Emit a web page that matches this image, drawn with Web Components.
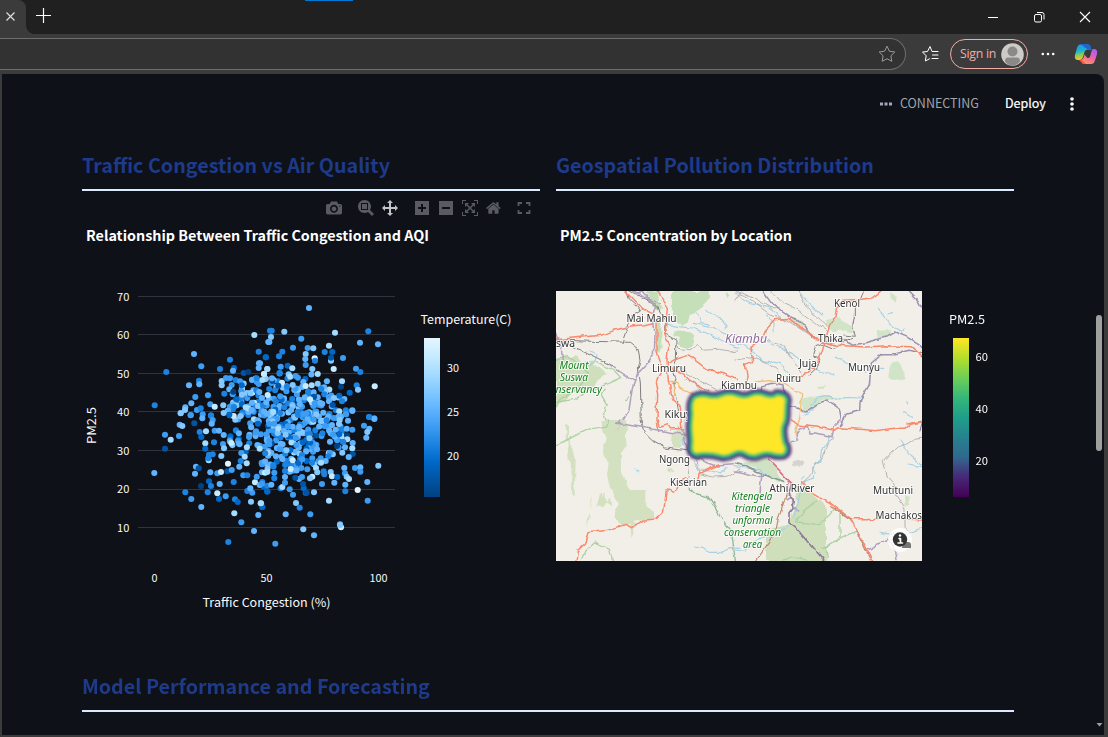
<!DOCTYPE html>
<html lang="en"><head><meta charset="utf-8"><title>Air Quality Dashboard</title>
<style>html,body{margin:0;height:100%;overflow:hidden;background:#3b3b3b;font-family:"Noto Sans CJK SC","Noto Sans",sans-serif}</style></head>
<body><dashboard-app></dashboard-app>
<script>
function define(name, html){
  const t=document.createElement('template'); t.innerHTML=html;
  customElements.define(name, class extends HTMLElement{
    constructor(){super();this.attachShadow({mode:'open'}).append(t.content.cloneNode(true));}
  });
}

define('browser-bar', `<style>
:host{display:block;height:74px}
.tabs{height:34px;background:#202020;display:flex;position:relative}
.tab{width:26px;background:#3b3b3b;border-radius:0 8px 0 0;display:flex;position:relative}
.tab i{position:absolute;left:26px;bottom:0;width:8px;height:8px;background:radial-gradient(circle at 100% 0,#202020 7.5px,#3b3b3b 8px)}
.tabs svg,.tools svg{display:block}
.new{margin:8px 0 0 9px}
.load{position:absolute;left:305px;top:0;width:48px;height:1px;background:#0078d4}
.win{margin-left:auto;display:flex}
.tools{height:40px;background:#3b3b3b;display:flex;align-items:center;box-sizing:border-box}
.addr{width:906px;height:32px;box-sizing:border-box;background:#323232;border:1px solid #6e6e6e;border-left:0;border-radius:0 16px 16px 0;display:flex;align-items:center;justify-content:flex-end;padding-right:9px}
.fav{margin-left:15px}
.sign{margin-left:10px;width:78px;height:30px;box-sizing:border-box;border:1px solid #f6aaa4;border-radius:15px;display:flex;align-items:center;justify-content:space-between;padding:0 3px 0 9px;color:#f6aaa4;font:12.3px "Open Sans","Noto Sans",sans-serif;white-space:nowrap;letter-spacing:-.25px}
.sign span{margin-top:-1px}
.dots{margin-left:12px}.cop{margin-left:18px}
</style>
<div class="tabs"><div class="tab"><svg width="26" height="34"><path d="M6.5 12.5l8 8m0-8l-8 8" stroke="#ddd" stroke-width="1.2"/></svg><i></i></div>
<svg class="new" width="18" height="18"><path d="M1 7.5h15M8.5 0v15" stroke="#fff" stroke-width="1.2"/></svg><div class="load"></div>
<svg class="win" width="138" height="34" fill="none" stroke="#fff"><path d="M18 17.5h10"/><rect x="64.500" y="14.500" width="7" height="7.500" rx="1.500"/><path d="M67 12.500h5a2 2 0 0 1 2 2v5"/><path d="M110 12l10 10m0-10l-10 10" stroke-width="1.100"/></svg></div>
<div class="tools"><div class="addr"><svg width="18" height="18" viewBox="0 0 18 18"><path d="M9 1.200l2.400 5 5.400.8-3.900 3.800.9 5.500L9 13.700l-4.800 2.600.9-5.500L1.200 7l5.400-.8z" fill="none" stroke="#999" stroke-linejoin="round"/></svg></div>
<svg class="fav" width="19" height="18" fill="none" stroke="#fff" stroke-linejoin="round" stroke-linecap="round"><path d="M17 6.500h-6L9 1.500 6.500 6.500 1.500 7l3.700 3.800-.9 5.200 4.200-2.200M11.500 10h5.500M11 13.500h6"/></svg>
<div class="sign"><span>Sign in</span><svg width="23" height="23"><circle cx="11.500" cy="11.500" r="11.300" fill="#cdcbc8"/><circle cx="11.500" cy="8.500" r="5" fill="#8b8987"/><path d="M4 18.500q0-4 3-4h9q3 0 3 4-3 4-7.500 4T4 18.500z" fill="#8b8987"/></svg></div>
<svg class="dots" width="16" height="4" fill="#fff"><circle cx="2.800" cy="2" r="1.300"/><circle cx="8" cy="2" r="1.300"/><circle cx="13.200" cy="2" r="1.300"/></svg>
<svg class="cop" width="24" height="24" viewBox="0 0 24 24"><defs><linearGradient id="a" x2=".2" y2="1"><stop stop-color="#238fff"/><stop offset=".45" stop-color="#18b5d0"/><stop offset=".7" stop-color="#8acb55"/><stop offset="1" stop-color="#f5c62a"/></linearGradient><linearGradient id="b" x1=".8" x2=".2" y2="1"><stop stop-color="#a65cf5"/><stop offset=".5" stop-color="#ee67a6"/><stop offset="1" stop-color="#ff9b55"/></linearGradient></defs>
<path d="M6 2.500h8q2 0 2.800 3l.5 2h-4q-2 0-2.800 2.500l-1.500 5Q8 18 5.500 18H4q-4 0-3-5l2-7q1-3.500 3-3.500z" fill="url(#a)"/><path d="M7 2h7q2 0 2.800 3l.5 2h-4L10 5z" fill="#2165ce"/><path d="M19 7h1q4 0 3 5l-2 6.500q-1 3.500-4 3.500h-7q-2 0-2.800-3L7 18q2-.3 2.800-3l.7-2.500 2.800 3.500h1q1.500 0 2-2l1-4Q18 7 19 7z" fill="url(#b)"/><path d="M5 18h3l4 4h-2q-2 0-2.800-2z" fill="#ff554a"/></svg></div>`);

define('app-toolbar', `<style>:host{display:flex;height:60px;align-items:center;color:#fff;font-size:12.500px;line-height:20px}
svg{display:block}span{margin-top:-2px}.s{margin-left:878px}.c{margin-left:7px;color:#a3a5ac;width:105px;white-space:nowrap}.d{width:62px;-webkit-text-stroke:.2px #fff}</style>
<svg class="s" width="13" height="4" fill="#a3a8b8"><path d="M0 .5h3v3H0zM4.500.5h3v3h-3zM9 .5h3v3H9z"/></svg><span class="c">CONNECTING</span><span class="d">Deploy</span>
<svg width="10" height="16" fill="#fff"><circle cx="5" cy="3" r="1.800"/><circle cx="5" cy="8" r="1.800"/><circle cx="5" cy="13" r="1.800"/></svg>`);

define('section-heading', `<style>:host{display:block;height:35px;border-bottom:2px solid #dbeafe;color:#1e3a8a;font-size:19.700px;font-weight:700;line-height:22px;white-space:nowrap}div{height:35px}</style><div><slot></slot></div>`);

const icons=[
['camera',1000,0,'m500 450c-83 0-150-67-150-150 0-83 67-150 150-150 83 0 150 67 150 150 0 83-67 150-150 150z m400 150h-120c-16 0-34 13-39 29l-31 93c-6 15-23 28-40 28h-340c-16 0-34-13-39-28l-31-94c-6-15-23-28-40-28h-120c-55 0-100-45-100-100v-450c0-55 45-100 100-100h800c55 0 100 45 100 100v450c0 55-45 100-100 100z m-400-550c-138 0-250 112-250 250 0 138 112 250 250 250 138 0 250-112 250-250 0-138-112-250-250-250z m365 380c-19 0-35 16-35 35 0 19 16 35 35 35 19 0 35-16 35-35 0-19-16-35-35-35z'],
['zoom',1000,16,'m1000-25l-250 251c40 63 63 138 63 218 0 224-182 406-407 406-224 0-406-182-406-406s183-406 407-406c80 0 155 22 218 62l250-250 125 125z m-812 250l0 438 437 0 0-438-437 0z m62 375l313 0 0-312-313 0 0 312z'],
['pan',1000,8,'m1000 350l-187 188 0-125-250 0 0 250 125 0-188 187-187-187 125 0 0-250-250 0 0 125-188-188 186-187 0 125 252 0 0-250-125 0 187-188 188 188-125 0 0 250 250 0 0-126 187 188z'],
['in',875,17,'m1 787l0-875 875 0 0 875-875 0z m687-500l-187 0 0-187-125 0 0 187-188 0 0 125 188 0 0 187 125 0 0-187 187 0 0-125z'],
['out',875,10,'m0 788l0-876 875 0 0 876-875 0z m688-500l-500 0 0 125 500 0 0-125z'],
['auto',1000,9,'m250 850l-187 0-63 0 0-62 0-188 63 0 0 188 187 0 0 62z m688 0l-188 0 0-62 188 0 0-188 62 0 0 188 0 62-62 0z m-875-938l0 188-63 0 0-188 0-62 63 0 187 0 0 62-187 0z m875 188l0-188-188 0 0-62 188 0 62 0 0 62 0 188-62 0z m-125 188l-1 0-93-94-156 156 156 156 92-93 2 0 0 250-250 0 0-2 93-92-156-156-156 156 94 92 0 2-250 0 0-250 0 0 93 93 157-156-157-156-93 94 0 0 0-250 250 0 0 0-94 93 156 157 156-157-93-93 0 0 250 0 0 250z'],
['home',928.6,8,'m786 296v-267q0-15-11-26t-25-10h-214v214h-143v-214h-214q-15 0-25 10t-11 26v267q0 1 0 2t0 2l321 264 321-264q1-1 1-4z m124 39l-34-41q-5-5-12-6h-2q-7 0-12 3l-386 322-386-322q-7-4-13-4-7 2-12 7l-35 41q-4 5-3 13t6 12l401 334q18 15 42 15t43-15l136-114v109q0 8 5 13t13 5h107q8 0 13-5t5-13v-227l122-102q5-5 6-12t-4-13z']];
define('chart-modebar', `<style>:host{display:flex;align-items:center;height:16px;padding-left:244px}svg{display:block;fill:#595b60}.pan{fill:#c3c4c6}.full{fill:none;margin-left:16px}</style>`+
icons.map(([n,w,m,d])=>`<svg class="${n}" viewBox="0 0 ${w} 1000" height="16" width="${w*.016}" style="margin-left:${m}px"><path transform="matrix(1 0 0 -1 0 850)" d="${d}"/></svg>`).join('')+
`<svg class="full" width="14" height="14" stroke="#595b60" stroke-width="1.800"><path d="M1.500 5V2H5M9 2h3.500v3M1.500 9v3H5M9 12h3.500V9"/></svg>`);

const pal=['#004280','#0054a3','#0068c9','#1c83e1','#3d9df3','#60b4ff','#83c9ff','#a6dcff','#c7ebff','#e4f5ff'];
/* [x offset, y offset, "x,y,colour step"] in thirds of a pixel */
const tiles=[
[130,280,'373,165,7 192,222,5 386,215,3 408,232,2 300,239,3 214,259,4 270,267,3 312,264,2 309,272,5 341,279,1 355,276,0 109,276,3 387,250,5 386,264,5 412,267,7 402,282,8 420,152,3 415,186,5 207,302,3 208,313,5 177,316,5 275,303,6 275,316,6 288,294,4 300,295,4 317,300,3 330,304,4 335,316,2 305,315,4 298,328,5 283,341,3 310,335,0 336,344,6 361,339,6 319,358,2 380,295,3 386,312,4 405,298,6 379,331,3 396,354,5 196,351,4 234,346,4 184,370,5 241,373,4 254,380,8 280,376,6 166,382,5 165,390,6 152,399,5 182,406,4 201,390,4 212,385,3 218,403,4 243,406,3 74,376,3 300,380,4 312,381,3 293,392,5 281,399,6 347,382,7 366,368,5 384,378,6 399,376,3 365,390,5 331,409,6 311,408,8 298,404,2 388,336,5 397,300,7 413,345,8 409,367,5'],
[260,280,'147,84,5 35,152,3 73,155,6 225,158,7 325,154,3 33,171,6 28,186,5 124,176,4 300,188,5 354,193,5 207,197,7 99,203,4 143,204,4 160,205,6 67,215,3 57,229,3 17,232,2 194,216,3 217,216,2 137,222,6 136,237,5 164,235,9 165,242,3 213,242,6 213,233,1 249,234,4 0,250,5 22,267,7 12,282,8 62,260,4 83,257,2 97,265,7 91,290,7 59,279,3 137,255,4 157,267,6 221,267,8 173,282,7 107,288,4 288,266,4 301,276,3 36,295,5 66,308,8 55,317,1 81,320,3 98,315,6 137,318,8 155,316,7 173,311,6 184,327,3 246,304,7 243,320,0 290,316,3 294,329,6 344,319,8 193,343,3 206,351,4 238,347,2 269,338,2 221,354,6 253,357,5 246,364,3 207,364,5 218,375,1 238,394,7 277,391,5 258,403,4 328,411,3 180,368,5 162,350,1 164,370,4 150,358,8 169,403,6 190,398,5 237,409,5 343,415,4'],
[130,410,'152,10,6 182,15,4 217,25,5 243,17,3 248,30,4 245,41,5 193,40,1 149,44,5 157,48,6 105,74,4 122,89,7 147,78,4 105,116,1 73,189,5 209,66,3 214,81,2 228,64,7 254,62,4 267,62,5 252,97,3 226,100,7 226,116,2 281,75,5 237,134,3 248,133,3 236,151,7 235,145,3 274,138,6 198,170,5 206,175,1 195,191,5 241,187,5 262,190,4 273,186,8 292,184,1 305,180,4 294,161,9 213,228,0 237,214,2 243,228,3 269,222,5 311,216,3 166,247,3 184,267,4 233,247,3 262,250,8 267,267,2 287,259,4 315,268,3 323,276,2 214,291,5 313,310,7 334,337,4 372,363,5 295,396,3 340,196,4 352,196,3 363,275,6 392,280,7 397,291,2 385,315,5 352,243,3 367,248,4 361,235,5 375,217,8 397,216,3 412,245,2 279,102,4 282,115,6 304,99,8 332,153,3 328,170,5 350,160,7 380,200,4 396,187,5 401,230,2 389,225,5'],
[260,410,'343,27,5 327,21,3 312,47,4 328,56,5 322,66,6 319,83,5 277,3,5 258,13,4 264,32,5 239,30,6 237,42,6 260,56,5 277,59,4 261,76,0 238,73,2 219,74,4 262,88,7 278,99,5 250,96,3 231,108,0 277,115,7 278,132,1 266,141,5 247,128,6 255,112,5 171,118,5 210,95,5 205,139,3 197,153,5 183,158,7 157,145,4 156,158,3 168,174,7 142,178,4 172,187,6 193,193,3 191,184,3 212,186,6 216,199,8 232,201,2 223,218,5 186,222,4 157,200,8 150,205,6 117,207,5 126,201,4 106,203,1 253,174,5 255,190,4 260,200,6 267,207,7 256,224,5 256,244,3 285,174,4 301,172,5 301,185,4 355,167,6 322,216,5 293,240,9 323,272,4 162,247,6 137,249,2 131,235,2 129,222,1 140,248,1 207,272,7 99,254,4 89,238,4 108,279,6 119,293,3 77,313,5 151,313,4 130,358,6 162,376,5 46,401,4 240,343,5 243,352,8 240,345,6 7,291,2 3,280,7 62,235,3 67,231,7 75,218,4 75,201,5 22,244,2 22,227,3 34,224,5 6,221,4 43,205,3 43,188,4 15,188,8 22,186,7 75,183,3 92,177,8 98,151,8 115,159,2 126,135,3 109,105,4 127,148,4']];
const T=(x,y,s,len,o='')=>`<text x="${x}" y="${y}" ${len?`textLength="${len}" lengthAdjust="spacingAndGlyphs"`:''} ${o}>${s}</text>`;
let seed=7129; const rnd=()=>((seed=(seed*16807)%2147483647)/2147483647);
const gauss=()=>Math.sqrt(-2*Math.log(rnd()))*Math.cos(6.28318*rnd());
let dots=[];
for(let n=0;n<370;){const x=288+gauss()*42,y=422+gauss()*32; if(((x-287)/64)**2+((y-421)/51)**2>1)continue;
  dots.push([x,y,Math.max(0,Math.min(9,Math.round(4.3+gauss()*1.3)))]);n++;}
for(const [ox,oy,s] of tiles)for(const p of s.split(' ')){const [x,y,c]=p.split(',').map(Number);dots.push([ox+x/3,oy+y/3,c]);}
define('scatter-chart', `<style>:host{display:block;width:458px;height:410px}svg{display:block;font-family:"Noto Sans CJK SC","Noto Sans",sans-serif;font-size:10.800px;fill:#fafafa}.t{font-size:13.800px;font-weight:700;fill:#fff}.a{font-size:12.300px}</style>
<svg width="458" height="410" viewBox="82 216 458 410"><defs><linearGradient id="g" y2="1" x2="0">${pal.slice().reverse().map((c,i)=>`<stop offset="${i/9}" stop-color="${c}"/>`).join('')}</linearGradient></defs>
${T(86,241,'Relationship Between Traffic Congestion and AQI',343,'class="t"')}
<path d="${[296.5,334.5,373.5,411.5,450.5,489.5,527.500].map(y=>`M138 ${y}H395`).join('')}" stroke="#31333c"/>
${dots.map(([x,y,c])=>`<circle cx="${x.toFixed(1)}" cy="${y.toFixed(1)}" r="3.050" fill="${pal[c]}"/>`).join('')}
${[70,60,50,40,30,20,10].map((v,i)=>T(117,301+Math.floor(i*38.5),v,12.3)).join('')}
${T(151.500,582,0)}${T(260.500,582,50,12)}${T(369.500,582,100,18)}
${T(202.500,607,'Traffic Congestion (%)',128,'class="a"')}
${T(0,0,'PM2.5',37,'class="a" transform="translate(96 444) rotate(-90)"')}
${T(420.500,324,'Temperature(C)',91,'class="a"')}
<rect x="424" y="338" width="16" height="159" fill="url(#g)"/>
${T(447,372,30,12)}${T(447,416,25,12)}${T(447,460,20,12)}</svg>`);

const L=(x,y,s,len)=>T(x,y,s,len,'class="l"'), G=(x,y,s,len)=>T(x,y,s,len,'class="n"');
const heat='M695 398Q701 395 708 397T722 396T737 396T751 396T765 396T777 395Q785 395 786 400Q785 406 785 413T783 424T782 436T785 446Q787 452 783 454Q778 455 772 453T759 454T746 453T733 453T720 455T706 453T697 454Q692 453 692 448Q693 441 692 434T692 420T692 408Q692 401 695 398Z';
define('heat-map', `<style>:host{display:block;width:458px;height:410px}svg{display:block;font-family:"Noto Sans CJK SC","Noto Sans",sans-serif;font-size:10.800px;fill:#fafafa}.t{font-size:13.800px;font-weight:700;fill:#fff}.a{font-size:12.300px}
.l,.n{font-family:"Noto Sans",sans-serif;font-size:10.300px;fill:#333;stroke:#fffc;stroke-width:2px;paint-order:stroke;stroke-linejoin:round}.n{font-style:italic;fill:#158020;font-size:10px}
path{stroke-linejoin:round;stroke-linecap:round}.o{stroke:#f9886d;stroke-width:4.400}.p{stroke:#b0a0bd;stroke-width:4.500}.w{stroke:#a5d2e5;stroke-width:3.400}.r{stroke:#aaa;stroke-width:2.600}.d{stroke:#808080;stroke-width:3}.gr{stroke:#acd2a3;stroke-width:4}.v{fill:#c5dfb9;stroke:none}.f{fill:#d0dfbb;stroke:none}.y{stroke:#f6bd75;stroke-width:3.800}</style>
<svg width="458" height="410" viewBox="556 216 458 410"><defs><clipPath id="c"><path d="M556 291h366v270H556z"/></clipPath><linearGradient id="v" x2="0" y2="1"><stop stop-color="#fde725"/><stop offset=".125" stop-color="#b5de2b"/><stop offset=".25" stop-color="#6ece58"/><stop offset=".375" stop-color="#35b779"/><stop offset=".5" stop-color="#1f9e89"/><stop offset=".625" stop-color="#26828e"/><stop offset=".75" stop-color="#31688e"/><stop offset=".875" stop-color="#482878"/><stop offset="1" stop-color="#440154"/></linearGradient><filter id="s" x="-20%" y="-20%" width="140%" height="140%"><feGaussianBlur stdDeviation=".9"/></filter>
<filter id="q" x="0" y="0" width="100%" height="100%" color-interpolation-filters="sRGB"><feTurbulence type="fractalNoise" baseFrequency=".1" numOctaves="2" seed="4"/><feDisplacementMap in="SourceGraphic" scale="5" xChannelSelector="R" yChannelSelector="G"/></filter></defs>
${T(560,241,'PM2.5 Concentration by Location',232,'class="t"')}
<g clip-path="url(#c)"><path fill="#f2efe9" d="M556 291h366v270H556z"/>
<g filter="url(#q)">
<g transform="translate(550 285) scale(.33333)" fill="none">
<path class="v" d="M366 18h110l2 22-18 20-15 18-25 8-6 25-13 11-20-9-15-25zM370 136l34 2 28 15-5 28-20 8-25-12 8-18-20-5zM288 18l36 3 3 30 9 16-8 12-15-12-8-21zM322 100l12 0 0 90-10 16-6-30zM530 20l8 12-4 8-6-9z"/>
<path class="f" d="M18 228l25-12 16 5 22-8 12 18 45-5-10 18 35 8 10 14-34 23-5 12-35 18-40 2-15 28-26 10z" />
<path class="gr" d="M18 225l30-10 24 12 40 35-24 45-32 18-28 20-10 24M140 230l54 28 18 20-62 28-35 13-40 24-57 8M165 315l-10 20 14 23-9 25 14 40M235 335l-6 12"/>
<path class="w" d="M118 198l24 10-7 20-15 14M443 84l14 29 18 5M470 76l26 20 19 4 17 20-8 12M352 118l35 7 42 4 50 20 42 20 46 20M430 115l60 12 30 18 40 5"/>
<path class="r" d="M378 180l12 12 30 2 20-12 28 13 40-2 30 5 25-3M382 242l28 22 32 18 30 18 30 15M405 285l30 12 20 25"/>
<path class="d" d="M230 20l8 22 22 20 13 17-30 18-26 73M18 164l78 4 143 4 25 20 6 35-5 22 6 45 3 120M240 18l48 26 30 14 14 24 18 24-6 18 0 22 34 20-2 60-8 20 10 35-8 20 16 80"/>
<path class="d" d="M18 165l75 30 95 47"/>
<path class="o" d="M18 164l80-8 58-5 37-15 47-12 44-5 28-6M225 18l38 40 32 25 18 8 8 22 0 85 13 45-4 25-14 22 7 35-2 75 5 40M325 18l12 28 15 22-4 48-4 32 12 32-5 46 4 60 14 60 22 20 4 60M352 236l22-12 45-14 28 22 25 20 40 12 50 20M360 247l38 18 20 20 30 18 28 13"/>
<path class="p" d="M18 142l16 44 5 70M250 18l25 12 30 20 15 15-10 30 5 55-2 55-23 32-28 30-15 43-10 65-35 60M180 240l72 48M256 26l23-8 20 25 32 12"/>
<path class="y" d="M358 292l22 0 10 18 38 17M366 293l12 45"/>
</g>
<g transform="translate(735 285) scale(.33333)" fill="none">
<path class="v" d="M463 250l10-16 16-2 23 30-1 18-29 8-18-6zM465 20l20 16-3 17-15-13zM425 138l42-3-4 20-35 5zM275 105l35-10 28 25 20 10-8 12-35-8-18 5-25-12zM160 110l20-12 20 10 10 20-30-6zM246 308l27-12-4 12-20 5zM195 345l35-8 40-8 38 10-50 10-28 25-22 5z" opacity=".7"/>
<path class="w" d="M0 170l50 25 35 32 50 8 42 50M88 165l30 15 35 15 30 20 35 30 82 28M95 90l22 24 0 28M190 18l30 36 40 38M430 70l30 42 40 28 9-13M300 213l52 30 40 22 15-15 36 0M227 358l23-22 32-4 20 12 32-7 40 2M235 375l-25 14M0 24l45 32 55 12 50 40M456 90l20-4M515 350l3 10M505 380l30 18"/>
<path class="r" d="M0 20l32 12 25 20 50 38 53 18 45 30 38 28M110 18l30 34 52 25 50 38 35 25M190 18l20 40 65 65M0 225l60-8 42 18 50 42M80 155l70 32 50 80M0 48l20-28 40 20 45 28 28 0"/>
<path class="d" d="M388 18l-8 20-22 28 0 30-5 28 8 30-34-4M350 160l-55 30-35-15-16 8-8 30 20 5-12 32-22 20"/>
<path class="p" style="stroke:#9c91af" d="M82 18l30 40 65 44 30 18 22 36 30 12 42-3 30 0 22 16 38-8 42-12 18-4 28-16 34 14 40 24 40 42M560 206l-38-10-40 10-38 0-35 28-6 65-28 50-1 28-40 10-18 35M520 18l30 30 10 20M155 360l60 18 28-18 35-12 35 25 8 42M80 325l0-22 30-8 34 8 3 24"/>
<path class="o" d="M28 317l8-44-5-35 22-8-5-40 25-18 15-36 30-32 43-4 35 28 43 30 20 8M438 18l-25 20-30 5-58 3-18 24-4 25-20 30-12 38-10 36-18 44-40 28-35 5M235 160l62 20 96 6 60-4 75 3 35 30M516 417l45-8"/>
<path class="y" d="M65 290l40-3 42 10 53 30-5 70-15 50"/>
</g>
<g transform="translate(550 420) scale(.33333)" fill="none">
<path class="f" d="M155 0h72l8 30-10 15 2 35-14 20 0 48 26 62 50 0 0 48 23 18 5 18-60 9-35 17-24-20-3-36 12-12-22-35-14-50 5-38-10-12-7-38 8-25-10-24zM45 10l12 8 0 50 12 20 8 30-3 112-8-8 2-67-12-35-4-58zM365 35l35-8 18 25-22 10-2 22-32-2zM242 306l24 8-12 10-10 30zM430 75l10 20-8 10-6-15zM120 220l4 38-2 10zM150 222l10 0 0 12 6-16 4 30 10-18 4 28-16-10-10 15-15-8-8 5zM115 275l4 12-6 38zM355 145l12 0 10 12-26-5z" opacity=".9"/>
<path class="gr" d="M18 78l94-50 58-10 6-18M93 422l12-30 28-26 45 22 10 34"/><path class="gr" d="M418 180l0 30 20 12 36 8 30 48 40 55 12 89" style="stroke:#92b798"/>
<path class="r" d="M410 125l6 35-5 20M410 90l30 26 10 45 40 10 40-2 40-22"/><path class="d" d="M270 0l12 38 25 24 38 22 78 10"/>
<path class="p" d="M200 10l85 13 125 23M210 0l-8 10M388 20l15 18 5 50M430 103l30 20 40 15 50-4"/>
<path class="w" d="M435 378l24 4 18 15 32 0 28-14 33 2M430 120l18 30 38 4 25 8 20-20M255 145l12 8M400 50l0 25"/>
<path class="o" d="M78 422l4-30 22-20 10-34 58-7 56-18 20 10 30-22 40-4 22-20 8-60 8-10 18 8 6-8 6-18 18-16M325 0l6 22 22-8 8 12 40 0M505 135l-58 25-5 30"/>
</g>
<g transform="translate(735 420) scale(.33333)" fill="none">
<path class="f" d="M180 195l45 22 48 45v161H93v-90l65-20 28-65z"/><path d="M170 125l16-8 20 12-12 12-22-4z" fill="#d5d3d0"/><path class="v" d="M20 130l70-18 30 30 20 36-10 8-60-40zM510 225l12 2 2 25-12 9z" opacity=".8"/>
<path class="gr" d="M242 242l-54 50-3 14 72 8 40-46 18 2 0 80-42 33 5 42M262 384l100-50M145 420l30-10 40 10"/>
<path class="w" d="M285 50l-22 35-5 38-18 15-5 35-35 15-10 60-15 45M210 165l-10 12M495 60l30 45 38 35M520 135l40 8M435 335l35 5 38 4 53-20M460 348l20-10M0 390l30 4 50-45 40-6 35-24M0 140l70 8 35 20 30 13"/>
<path class="r" d="M290 40l5 15-18 12-12 45-22 20-18 35-30 28M560 55l-25 4-20 13-30 10-40 42 12 45 16 15 12 40 25 40 0 60 10 15-15 16"/>
<path class="p" d="M170 65l18-5-5-15 10-18 28-8 0 20 20-1 50 12 8-34 15-16M80 168l-5 50M0 153l65 14 35-2M395 392l65-35 18 35 5 30M155 240l18-10 0 25 15 18" />
<path class="d" style="stroke:#8d7c97;stroke-width:5" d="M170 190l-10 35 18 10-4 28-12 15 0 30 22 18 30 35 50 60"/><path class="gr" style="stroke:#879b92;stroke-width:5" d="M0 130l32 8 32 15 45 18 40 14"/>
<path class="o" d="M170 0l20 15 55 6 55 10 12-8 80 6 30 3 55-7 35 0 15-12 36-8M200 185l22 30 35 20 30 15 60 46 50 0 16 8 25-12M500 296l60 4M412 422l-5-10-45-88-15-26"/><path class="d" style="stroke:#b98a70;stroke-width:3.500" d="M160 190l-10 50-20 55-8 40-60 85M290 260l56 37M362 330l44 90"/><path class="o" style="stroke:#dd6b82;stroke-width:5" d="M100 118l35 35 35 38"/>
</g></g>
<g filter="url(#s)" fill="none"><path d="${heat}" stroke="#44015477" stroke-width="13"/><path d="${heat}" stroke="#453781" stroke-width="9.500"/><path d="${heat}" stroke="#21918c" stroke-width="5.500"/><path d="${heat}" stroke="#5ec962" stroke-width="2.500" fill="#fde725"/></g>
${L(626.500,322,'Mai Mahiu',50)}${L(556,347,'swa',19)}${L(652,372,'Limuru',34)}${L(721,389,'Kiambu',36)}${L(834,307,'Kenol',26)}${L(818,342,'Thika',25)}${L(799,367,'Juja',18)}${L(776,382,'Ruiru',25)}${L(848,370.500,'Munyu',32)}${L(659,463,'Ngong',31)}${L(670,485.500,'Kiserian',37)}${L(769.500,492,'Athi River',45)}${L(873,494,'Mutituni',40)}${L(875.500,518.500,'Machakos',46.500)}
<svg x="556" y="291" width="131.500" height="270" viewBox="556 291 131.500 270">${L(664.500,417.500,'Kikuy',27)}</svg>
${T(725,343,'Kiambu',42,'class="n" style="font-size:12px;fill:#8d6c9c"')}
${G(559.500,369,'Mount',29)}${G(560,381,'Suswa',28)}${G(555.500,393,'nservancy',46.500)}
${G(731.500,500,'Kitengela',41)}${G(735,512,'triangle',35)}${G(732.500,524,'unformal',40)}${G(724,536,'conservation',57)}${G(743,548,'area',19)}
<path d="M920 431l2-8" stroke="#8d6c9c"/>
<rect x="888" y="528" width="24" height="24" rx="12" fill="#fff" opacity=".8"/><path d="M903 542h5q3 0 3 3v3h-9z" fill="#777"/><circle cx="900" cy="539.500" r="7.200" fill="#333"/><path d="M899 538.500h1.500v4.500M898 543h4.500" stroke="#fff" stroke-width="1.600"/><circle cx="900" cy="535.500" r="1.200" fill="#fff"/></g>
${T(949,324,'PM2.5',36,'class="a"')}<rect x="953" y="338" width="16" height="159" fill="url(#v)"/>
${T(975.500,361,60,12.5)}${T(975.500,413,40,12.500)}${T(975.500,465,20,12.500)}</svg>`);

define('page-scrollbar', `<style>:host{display:flex;flex-direction:column;width:14px;height:661px;box-sizing:border-box;padding:241px 0 0 6px}div{width:6px;height:136px;border-radius:3px;background:#9f9f9f}svg{display:block;margin-top:271px}</style><div></div><svg width="7" height="6" fill="#9f9f9f"><path d="M.5 1h6L3.500 4.500z"/></svg>`);

define('dashboard-app', `<style>:host{display:block;width:1108px;height:737px;background:#3b3b3b;overflow:hidden}
.page{margin-left:2px;width:1102px;height:661px;background:#0e1117;border-radius:0 8px 0 0;display:flex;overflow:hidden}
main{width:1088px}.grid{display:grid;grid-template-columns:458px 458px;column-gap:16px;padding:20px 0 0 80px}
chart-modebar{margin-top:9px}.spacer{height:25px}.last{padding:49px 0 0 80px;width:932px}</style>
<browser-bar></browser-bar><div class="page"><main><app-toolbar></app-toolbar>
<div class="grid"><section><section-heading>Traffic Congestion vs Air Quality</section-heading><chart-modebar></chart-modebar><scatter-chart></scatter-chart></section>
<section><section-heading>Geospatial Pollution Distribution</section-heading><div class="spacer"></div><heat-map></heat-map></section></div>
<div class="last"><section-heading>Model Performance and Forecasting</section-heading></div></main><page-scrollbar></page-scrollbar></div>`);
</script></body></html>
